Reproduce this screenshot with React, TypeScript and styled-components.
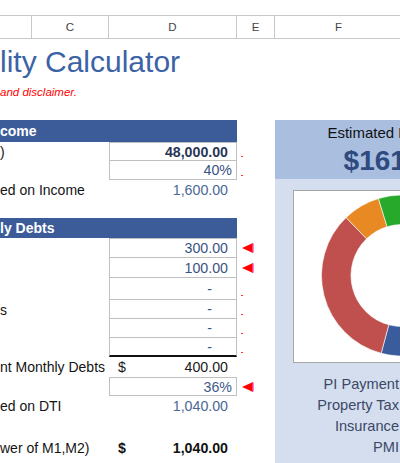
import React from 'react'
import styled, { createGlobalStyle } from 'styled-components'

const GlobalStyle = createGlobalStyle`
   html, body {
      margin: 0;
      padding: 0;
      background: #fff;
   }
   body {
      width: 400px;
      height: 463px;
      overflow: hidden;
      font-family: 'Liberation Sans', Arial, sans-serif;
   }
`

const Sheet = styled.div`
   width: 400px;
   height: 463px;
   overflow: hidden;
`

const ColumnBar = styled.div`
   margin-top: 15px;
   display: grid;
   grid-template-columns: 32px 77px 128px 38px 128px 128px;
   height: 24px;
   border-top: 1px solid #c8c8c8;
   border-bottom: 1px solid #c8c8c8;
   box-sizing: border-box;
`

const ColumnName = styled.div`
   display: flex;
   align-items: center;
   justify-content: center;
   border-right: 1px solid #c8c8c8;
   font-size: 11.5px;
   color: #444;
`

const Title = styled.h1`
   margin: 6px 0 0;
   font-size: 30px;
   line-height: 34px;
   font-weight: normal;
   color: #3b63a5;
   white-space: nowrap;
`

const Note = styled.div`
   margin-top: 5px;
   font-size: 11.5px;
   line-height: 16px;
   font-style: italic;
   color: #f00;
`

const Main = styled.div`
   margin-top: 20px;
   display: flex;
   align-items: flex-start;
`

const LeftPart = styled.div`
   width: 275px;
   flex-shrink: 0;
`

const SectionBar = styled.div<{ $h: number }>`
   width: 237px;
   height: ${(p) => p.$h}px;
   display: flex;
   align-items: center;
   background: #3b5b99;
   color: #fff;
   font-weight: bold;
   font-size: 14px;
   white-space: nowrap;
`

const Row = styled.div<{ $h: number }>`
   display: grid;
   grid-template-columns: 109px 128px 38px;
   height: ${(p) => p.$h}px;
`

const Label = styled.div`
   display: flex;
   align-items: center;
   font-size: 14px;
   color: #141414;
   white-space: nowrap;
   overflow: visible;
`

type Edge = 'none' | 'box' | 'boxTop' | 'boxEnd'

const Value = styled.div<{
   $edge: Edge
   $pad: number
   $bold?: boolean
   $color: string
}>`
   box-sizing: border-box;
   display: flex;
   align-items: center;
   justify-content: space-between;
   padding-right: ${(p) => p.$pad}px;
   font-size: 14.2px;
   font-weight: ${(p) => (p.$bold ? 'bold' : 'normal')};
   color: ${(p) => p.$color};
   white-space: nowrap;
   border-left: 1px solid
      ${(p) => (p.$edge === 'none' ? 'transparent' : '#bfbfbf')};
   border-right: 1px solid
      ${(p) => (p.$edge === 'none' ? 'transparent' : '#bfbfbf')};
   border-top: ${(p) => (p.$edge === 'boxTop' ? '1px solid #bfbfbf' : 'none')};
   border-bottom: ${(p) =>
      p.$edge === 'none'
         ? 'none'
         : p.$edge === 'boxEnd'
         ? '2px solid #111'
         : '1px solid #bfbfbf'};
`

const Currency = styled.span`
   padding-left: 8px;
`

const Marker = styled.div<{ $kind: 'dash' | 'arrow' | 'none' }>`
   display: flex;
   align-items: ${(p) => (p.$kind === 'dash' ? 'flex-end' : 'center')};
   padding-left: ${(p) => (p.$kind === 'dash' ? 4 : 5)}px;
   padding-bottom: ${(p) => (p.$kind === 'dash' ? 4 : 0)}px;
`

const RedDash = styled.span`
   display: block;
   width: 2px;
   height: 1px;
   background: #f33;
`

const Panel = styled.div`
   width: 254px;
   flex-shrink: 0;
   background: #d4deef;
`

const PanelHead = styled.div`
   height: 59px;
   display: flex;
   flex-direction: column;
   align-items: center;
   background: #aabee0;
`

const PanelTitle = styled.div`
   margin-top: 4px;
   font-size: 15px;
   line-height: 18px;
   color: #111;
   white-space: nowrap;
`

const PanelAmount = styled.div`
   margin-top: 3px;
   font-size: 28px;
   line-height: 32px;
   font-weight: bold;
   color: #2e4a7e;
`

const PanelBody = styled.div`
   padding: 11px 18px 20px;
`

const ChartBox = styled.div`
   box-sizing: border-box;
   height: 173px;
   background: #fff;
   border: 1px solid #a6a6a6;
   display: flex;
`

const Legend = styled.div`
   margin-top: 11px;
   display: grid;
   grid-template-columns: 106px 1fr;
   column-gap: 10px;
   font-size: 14.6px;
   line-height: 21px;
   color: #3b4866;
`

const LegendName = styled.div`
   text-align: right;
   white-space: nowrap;
`

const LegendValue = styled.div`
   white-space: nowrap;
`

const Arrow = () => (
   <svg width="12" height="10" viewBox="0 0 12 10">
      <polygon points="0,5 11,0 11,10" fill="#f00" />
      <line x1="11" y1="0.5" x2="11" y2="9.5" stroke="#ff4fa8" strokeWidth="1.4" />
   </svg>
)

type Slice = { from: number; to: number; color: string }

const slices: Slice[] = [
   { from: 0, to: 195, color: '#3a5c9c' },
   { from: 195, to: 316, color: '#c0504d' },
   { from: 316, to: 343, color: '#e88924' },
   { from: 343, to: 360, color: '#27a92b' },
]

const point = (cx: number, cy: number, r: number, deg: number) => {
   const rad = (deg * Math.PI) / 180
   return [cx + r * Math.sin(rad), cy - r * Math.cos(rad)]
}

const sector = (cx: number, cy: number, r0: number, r1: number, a0: number, a1: number) => {
   const large = a1 - a0 > 180 ? 1 : 0
   const [x1, y1] = point(cx, cy, r1, a0)
   const [x2, y2] = point(cx, cy, r1, a1)
   const [x3, y3] = point(cx, cy, r0, a1)
   const [x4, y4] = point(cx, cy, r0, a0)
   return `M${x1} ${y1} A${r1} ${r1} 0 ${large} 1 ${x2} ${y2} L${x3} ${y3} A${r0} ${r0} 0 ${large} 0 ${x4} ${y4} Z`
}

const Donut = () => (
   <svg width="100%" height="100%">
      {slices.map((s) => (
         <path
            key={s.color}
            d={sector(108, 84.5, 51, 80.5, s.from, s.to)}
            fill={s.color}
            stroke="#fff"
            strokeWidth="0.6"
         />
      ))}
   </svg>
)

type Line = {
   h: number
   label?: string
   value?: string
   currency?: string
   edge?: Edge
   pad?: number
   bold?: boolean
   color?: string
   mark?: 'dash' | 'arrow' | 'none'
}

const income: Line[] = [
   { h: 19, label: ')', value: '48,000.00', edge: 'boxTop', pad: 8, bold: true, color: '#283654', mark: 'dash' },
   { h: 19, value: '40%', edge: 'box', pad: 4, color: '#3a5383', mark: 'dash' },
   { h: 19, label: 'ed on Income', value: '1,600.00', pad: 8, color: '#4a6797' },
   { h: 19 },
]

const debts: Line[] = [
   { h: 20, value: '300.00', edge: 'boxTop', pad: 8, color: '#3a5383', mark: 'arrow' },
   { h: 20, value: '100.00', edge: 'box', pad: 8, color: '#3a5383', mark: 'arrow' },
   { h: 22, value: '-', edge: 'box', pad: 24, color: '#3a5383', mark: 'dash' },
   { h: 19, label: 's', value: '-', edge: 'box', pad: 24, color: '#3a5383', mark: 'dash' },
   { h: 19, value: '-', edge: 'box', pad: 24, color: '#3a5383', mark: 'dash' },
   { h: 19, value: '-', edge: 'boxEnd', pad: 24, color: '#3a5383', mark: 'dash' },
   { h: 20, label: 'nt Monthly Debts', currency: '$', value: '400.00', pad: 8, color: '#1a1a1a' },
   { h: 19, value: '36%', edge: 'boxTop', pad: 4, color: '#3e5a8a', mark: 'arrow' },
   { h: 20, label: 'ed on DTI', value: '1,040.00', pad: 8, color: '#4a6797' },
   { h: 21 },
   { h: 22, label: 'wer of M1,M2)', currency: '$', value: '1,040.00', pad: 8, bold: true, color: '#111' },
]

const SheetRow = ({ line }: { line: Line }) => (
   <Row $h={line.h}>
      <Label>{line.label}</Label>
      <Value
         $edge={line.edge || 'none'}
         $pad={line.pad || 8}
         $bold={line.bold}
         $color={line.color || '#111'}
      >
         <Currency>{line.currency}</Currency>
         <span>{line.value}</span>
      </Value>
      <Marker $kind={line.mark || 'none'}>
         {line.mark === 'dash' && <RedDash />}
         {line.mark === 'arrow' && <Arrow />}
      </Marker>
   </Row>
)

const legend = [
   ['PI Payment', '$562'],
   ['Property Tax', '$350'],
   ['Insurance', '$78'],
   ['PMI', '$49'],
]

export default function App() {
   return (
      <Sheet>
         <GlobalStyle />
         <ColumnBar>
            <ColumnName />
            <ColumnName>C</ColumnName>
            <ColumnName>D</ColumnName>
            <ColumnName>E</ColumnName>
            <ColumnName>F</ColumnName>
            <ColumnName />
         </ColumnBar>
         <Title>lity Calculator</Title>
         <Note>and disclaimer.</Note>
         <Main>
            <LeftPart>
               <SectionBar $h={22}>come</SectionBar>
               {income.map((line, i) => (
                  <SheetRow key={`i${i}`} line={line} />
               ))}
               <SectionBar $h={20}>ly Debts</SectionBar>
               {debts.map((line, i) => (
                  <SheetRow key={`d${i}`} line={line} />
               ))}
            </LeftPart>
            <Panel>
               <PanelHead>
                  <PanelTitle>Estimated Home Price</PanelTitle>
                  <PanelAmount>$161,587</PanelAmount>
               </PanelHead>
               <PanelBody>
                  <ChartBox>
                     <Donut />
                  </ChartBox>
                  <Legend>
                     {legend.map(([name, value]) => (
                        <React.Fragment key={name}>
                           <LegendName>{name}</LegendName>
                           <LegendValue>{value}</LegendValue>
                        </React.Fragment>
                     ))}
                  </Legend>
               </PanelBody>
            </Panel>
         </Main>
      </Sheet>
   )
}
